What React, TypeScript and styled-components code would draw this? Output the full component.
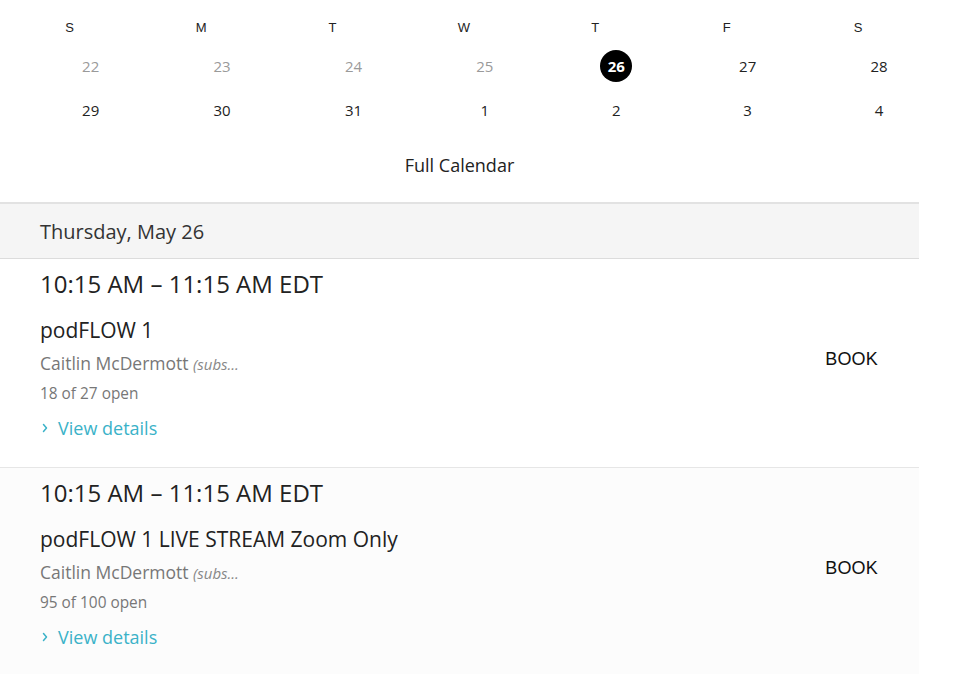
import styled, { createGlobalStyle } from "styled-components";

const GlobalStyle = createGlobalStyle`
  html, body {
    margin: 0;
    padding: 0;
    background: #ffffff;
  }
  body {
    font-family: "Open Sans", "Noto Sans", sans-serif;
    color: #222222;
  }
`;

type Day = { label: number; muted?: boolean; selected?: boolean };

const weekDays = ["S", "M", "T", "W", "T", "F", "S"];

const weeks: Day[][] = [
  [
    { label: 22, muted: true },
    { label: 23, muted: true },
    { label: 24, muted: true },
    { label: 25, muted: true },
    { label: 26, selected: true },
    { label: 27 },
    { label: 28 },
  ],
  [
    { label: 29 },
    { label: 30 },
    { label: 31 },
    { label: 1 },
    { label: 2 },
    { label: 3 },
    { label: 4 },
  ],
];

type ClassSlot = {
  time: string;
  title: string;
  instructor: string;
  openText: string;
};

const slots: ClassSlot[] = [
  {
    time: "10:15 AM – 11:15 AM EDT",
    title: "podFLOW 1",
    instructor: "Caitlin McDermott",
    openText: "18 of 27 open",
  },
  {
    time: "10:15 AM – 11:15 AM EDT",
    title: "podFLOW 1 LIVE STREAM Zoom Only",
    instructor: "Caitlin McDermott",
    openText: "95 of 100 open",
  },
];

export default function App() {
  return (
    <>
      <GlobalStyle />
      <S.Page>
        <S.Calendar>
          <S.WeekHeader>
            {weekDays.map((d, i) => (
              <S.WeekDay key={i}>{d}</S.WeekDay>
            ))}
          </S.WeekHeader>
          <S.Weeks>
            {weeks.map((week, wi) => (
              <S.WeekRow key={wi}>
                {week.map((day) => (
                  <S.DayCell key={day.label}>
                    <S.DayNumber $muted={day.muted} $selected={day.selected}>
                      {day.label}
                    </S.DayNumber>
                  </S.DayCell>
                ))}
              </S.WeekRow>
            ))}
          </S.Weeks>
          <S.FullCalendar>Full Calendar</S.FullCalendar>
        </S.Calendar>

        <S.DateBar>Thursday, May 26</S.DateBar>

        {slots.map((slot, i) => (
          <S.Slot key={i} $alt={i % 2 === 1}>
            <S.SlotInfo>
              <S.Time>{slot.time}</S.Time>
              <S.Title>{slot.title}</S.Title>
              <S.Instructor>
                {slot.instructor} <em>(subs...</em>
              </S.Instructor>
              <S.Open>{slot.openText}</S.Open>
              <S.Details>
                <S.Chevron viewBox="0 0 10 14" aria-hidden>
                  <path d="M3.5 3.5 L6.5 7 L3.5 10.5" />
                </S.Chevron>
                View details
              </S.Details>
            </S.SlotInfo>
            <S.Book>BOOK</S.Book>
          </S.Slot>
        ))}
      </S.Page>
    </>
  );
}

const S = {
  Page: styled.div`
    width: 919px;
    display: flex;
    flex-direction: column;
  `,

  Calendar: styled.div`
    display: flex;
    flex-direction: column;
    padding-top: 17px;
  `,

  WeekHeader: styled.div`
    display: grid;
    grid-template-columns: repeat(7, 131.4px);
    padding-left: 4px;
    height: 20px;
    align-items: center;
  `,

  WeekDay: styled.div`
    text-align: center;
    font-family: "Liberation Sans", Arial, sans-serif;
    font-size: 13px;
    color: #222222;
  `,

  Weeks: styled.div`
    display: flex;
    flex-direction: column;
    margin-top: 7px;
  `,

  WeekRow: styled.div`
    display: grid;
    grid-template-columns: repeat(7, 131.4px);
    padding-left: 25px;
    height: 44px;
    align-items: center;
  `,

  DayCell: styled.div`
    display: flex;
    justify-content: center;
  `,

  DayNumber: styled.span<{ $muted?: boolean; $selected?: boolean }>`
    width: 32px;
    height: 32px;
    border-radius: 50%;
    display: flex;
    align-items: center;
    justify-content: center;
    font-size: 15px;
    font-weight: ${(p) => (p.$selected ? 700 : 400)};
    color: ${(p) => (p.$selected ? "#ffffff" : p.$muted ? "#9a9a9a" : "#222222")};
    background: ${(p) => (p.$selected ? "#000000" : "transparent")};
  `,

  FullCalendar: styled.div`
    text-align: center;
    font-size: 18px;
    color: #222222;
    padding: 21px 0 25px;
    line-height: 24px;
  `,

  DateBar: styled.div`
    background: #f5f5f5;
    border-top: 2px solid #e2e2e2;
    border-bottom: 1px solid #dcdcdc;
    height: 57px;
    box-sizing: border-box;
    padding-left: 40px;
    display: flex;
    align-items: center;
    font-size: 20px;
    color: #333333;
  `,

  Slot: styled.div<{ $alt?: boolean }>`
    display: flex;
    padding: 10px 41px 0 40px;
    height: 209px;
    box-sizing: border-box;
    background: ${(p) => (p.$alt ? "#fcfcfc" : "#ffffff")};
    border-bottom: 1px solid #e6e6e6;
  `,

  SlotInfo: styled.div`
    flex: 1;
    display: flex;
    flex-direction: column;
  `,

  Time: styled.div`
    font-size: 24px;
    line-height: 30px;
    color: #222222;
  `,

  Title: styled.div`
    font-size: 21px;
    line-height: 26px;
    margin-top: 18px;
    color: #222222;
  `,

  Instructor: styled.div`
    font-size: 17.5px;
    line-height: 22px;
    margin-top: 9px;
    color: #777777;
    em {
      font-size: 15px;
      color: #888888;
    }
  `,

  Open: styled.div`
    font-size: 15.4px;
    line-height: 20px;
    margin-top: 9px;
    color: #777777;
  `,

  Details: styled.div`
    display: flex;
    align-items: center;
    gap: 8px;
    font-size: 18px;
    line-height: 24px;
    margin-top: 12px;
    color: #3ab2c8;
  `,

  Chevron: styled.svg`
    width: 10px;
    height: 14px;
    fill: none;
    stroke: #3ab2c8;
    stroke-width: 1.5;
    stroke-linecap: round;
    stroke-linejoin: round;
  `,

  Book: styled.div`
    align-self: flex-start;
    margin-top: 79px;
    font-family: "Liberation Sans", Arial, sans-serif;
    font-size: 18px;
    line-height: 22px;
    color: #111111;
    letter-spacing: 0.2px;
  `,
};
